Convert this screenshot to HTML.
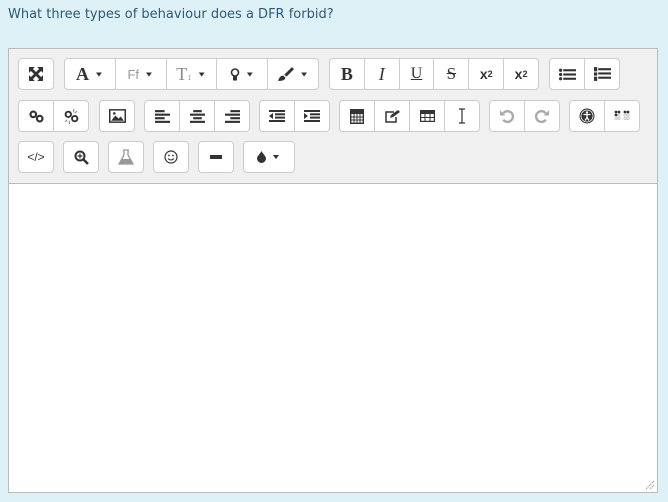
<!DOCTYPE html>
<html><head><meta charset="utf-8"><style>
*{box-sizing:border-box;margin:0;padding:0}
body{width:668px;height:502px;background:#def1f7;font-family:"Liberation Sans",sans-serif;position:relative;overflow:hidden}
.q{position:absolute;left:8px;top:7px;color:#2d5a76;font-family:"DejaVu Sans","Liberation Sans",sans-serif;font-size:13px}
.box{position:absolute;left:8px;top:48px;width:650px;height:445px;border:1px solid #bbb;background:#fff}
.tb{position:absolute;left:0;top:0;width:648px;height:135px;background:#f0f0f0;border-bottom:1px solid #bbb}
.g{position:absolute;height:32px;border:1px solid #ccc;border-radius:4px;background:#fff;display:flex}
.g span{flex:1;display:flex;align-items:center;justify-content:center;border-left:1px solid #ccc;color:#333;font-size:13px;height:100%}
.g span:first-child{border-left:none}
.c{font-size:10px;margin-left:5px;color:#333;font-style:normal;transform:scaleY(0.7)}
svg{display:block}
.rz{position:absolute;right:2px;bottom:2px}
</style></head><body>
<div class="q">What three types of behaviour does a DFR forbid?</div>
<div class="box"><div class="tb">
<div class="g" style="left:9px;top:9px;width:36px"><span><svg width="14" height="14" viewBox="0 0 12 12"><path d="M0 0h5L0 5zM12 0v5L7 0zM0 12V7l5 5zM12 12H7l5-5z" fill="#333"/><path d="M2 2l8 8M10 2l-8 8" stroke="#333" stroke-width="2.4"/></svg></span></div>
<div class="g" style="left:55px;top:9px;width:255px">
<span><b style="font-family:'Liberation Serif';font-size:18px">A</b><i class="c">▼</i></span>
<span><b style="font-weight:normal;color:#999;font-size:13px">Ff</b><i class="c">▼</i></span>
<span><b style="font-family:'Liberation Serif';font-weight:normal;color:#888;font-size:18px">T<small style="font-size:9px">↕</small></b><i class="c">▼</i></span>
<span><svg width="10" height="15" viewBox="0 0 10 14"><circle cx="5" cy="5" r="3.5" fill="none" stroke="#333" stroke-width="1.6"/><rect x="3" y="9" width="4" height="4" fill="#333"/></svg><i class="c">▼</i></span>
<span><svg width="17" height="15" viewBox="0 0 16 14"><path d="M15 1L8 8" stroke="#333" stroke-width="2.8"/><path d="M1 13c1-3 2-5 5-5l2 2c-1 3-4 3-7 3z" fill="#333"/></svg><i class="c">▼</i></span>
</div>
<div class="g" style="left:320px;top:9px;width:210px">
<span style="font-family:'Liberation Serif';font-weight:bold;font-size:18px">B</span>
<span style="font-family:'Liberation Serif';font-style:italic;font-size:18px">I</span>
<span style="font-family:'Liberation Serif';text-decoration:underline;font-size:16px">U</span>
<span style="font-family:'Liberation Serif';text-decoration:line-through;font-size:17px">S</span>
<span style="font-weight:bold;font-size:14px">x<sub style="font-size:9px">2</sub></span>
<span style="font-weight:bold;font-size:14px">x<sup style="font-size:9px">2</sup></span>
</div>
<div class="g" style="left:540px;top:9px;width:71px">
<span><svg width="17" height="13" viewBox="0 0 16 12"><g fill="#333"><circle cx="1.5" cy="2" r="1.5"/><circle cx="1.5" cy="6" r="1.5"/><circle cx="1.5" cy="10" r="1.5"/><rect x="4" y="1" width="12" height="2"/><rect x="4" y="5" width="12" height="2"/><rect x="4" y="9" width="12" height="2"/></g></svg></span>
<span><svg width="17" height="14" viewBox="0 0 16 13"><g fill="#333"><rect x="0" y="0" width="3" height="4"/><rect x="0" y="5" width="3" height="3"/><rect x="0" y="9" width="3" height="4"/><rect x="4" y="1" width="12" height="2"/><rect x="4" y="5" width="12" height="2"/><rect x="4" y="9" width="12" height="2"/></g></svg></span>
</div>
<div class="g" style="left:9px;top:51px;width:71px">
<span><svg width="15" height="13" viewBox="0 0 14 12"><circle cx="4" cy="4" r="2.6" fill="none" stroke="#333" stroke-width="2"/><circle cx="10" cy="8" r="2.6" fill="none" stroke="#333" stroke-width="2"/></svg></span>
<span><svg width="15" height="15" viewBox="0 0 14 14"><circle cx="4" cy="5" r="2.5" fill="none" stroke="#333" stroke-width="1.8"/><circle cx="10" cy="9" r="2.5" fill="none" stroke="#333" stroke-width="1.8"/><path d="M9 0v3M12 2l-2 2M1 12l2-2M5 14v-3" stroke="#888"/></svg></span>
</div>
<div class="g" style="left:90px;top:51px;width:36px"><span><svg width="17" height="14" viewBox="0 0 16 13"><rect x="0.7" y="0.7" width="14.6" height="11.6" fill="none" stroke="#333" stroke-width="1.4"/><path d="M2 11l4-5 3 3 2-2 3 4z" fill="#333"/><circle cx="5" cy="4" r="1.2" fill="#333"/></svg></span></div>
<div class="g" style="left:135px;top:51px;width:106px">
<span><svg width="15" height="13" viewBox="0 0 14 12" fill="#333"><rect y="0" width="9" height="2"/><rect y="3.3" width="14" height="2"/><rect y="6.6" width="9" height="2"/><rect y="10" width="14" height="2"/></svg></span>
<span><svg width="15" height="13" viewBox="0 0 14 12" fill="#333"><rect x="3" y="0" width="8" height="2"/><rect y="3.3" width="14" height="2"/><rect x="3" y="6.6" width="8" height="2"/><rect y="10" width="14" height="2"/></svg></span>
<span><svg width="15" height="13" viewBox="0 0 14 12" fill="#333"><rect x="5" y="0" width="9" height="2"/><rect y="3.3" width="14" height="2"/><rect x="5" y="6.6" width="9" height="2"/><rect y="10" width="14" height="2"/></svg></span>
</div>
<div class="g" style="left:250px;top:51px;width:71px">
<span><svg width="16" height="12" viewBox="0 0 16 12" fill="#333"><rect y="0" width="16" height="2"/><rect x="6" y="3.3" width="10" height="2"/><rect x="6" y="6.6" width="10" height="2"/><rect y="10" width="16" height="2"/><path d="M4 3v6L0 6z"/></svg></span>
<span><svg width="16" height="12" viewBox="0 0 16 12" fill="#333"><rect y="0" width="16" height="2"/><rect x="6" y="3.3" width="10" height="2"/><rect x="6" y="6.6" width="10" height="2"/><rect y="10" width="16" height="2"/><path d="M0 3v6l4-3z"/></svg></span>
</div>
<div class="g" style="left:330px;top:51px;width:141px">
<span><svg width="14" height="15" viewBox="0 0 14 15"><rect x="0.7" y="0.7" width="12.6" height="13.6" fill="none" stroke="#333" stroke-width="1.4"/><rect x="1" y="1" width="12" height="4" fill="#333"/><path d="M1 8h12M1 11h12M4 5v9M7 5v9M10 5v9" stroke="#333"/></svg></span>
<span><svg width="15" height="13" viewBox="0 0 15 13"><path d="M9 2H1v10h10V7" fill="none" stroke="#333" stroke-width="1.5"/><path d="M5 8l1-3 7-5 2 2-7 5z" fill="#333"/></svg></span>
<span><svg width="15" height="12" viewBox="0 0 15 12"><rect x="0.6" y="0.6" width="13.8" height="10.8" fill="none" stroke="#333" stroke-width="1.2"/><rect x="1" y="1" width="13" height="3" fill="#333"/><path d="M1 7.5h13M5 4v8M10 4v8" stroke="#333"/></svg></span>
<span><svg width="8" height="16" viewBox="0 0 8 16"><path d="M1 1h6M4 1v14M1 15h6" stroke="#333" stroke-width="1.2" fill="none"/></svg></span>
</div>
<div class="g" style="left:480px;top:51px;width:71px">
<span><svg width="14" height="14" viewBox="0 0 13 13"><path d="M3 4a5 5 0 1 1 0 6" fill="none" stroke="#aaa" stroke-width="2.2"/><path d="M0 1v5h5z" fill="#aaa"/></svg></span>
<span><svg width="14" height="14" viewBox="0 0 13 13"><path d="M10 4a5 5 0 1 0 0 6" fill="none" stroke="#aaa" stroke-width="2.2"/><path d="M13 1v5H8z" fill="#aaa"/></svg></span>
</div>
<div class="g" style="left:560px;top:51px;width:71px">
<span><svg width="16" height="16" viewBox="0 0 16 16"><circle cx="8" cy="8" r="7.5" fill="#333"/><circle cx="8" cy="8" r="6" fill="none" stroke="#fff" stroke-width="0.8"/><circle cx="8" cy="4.5" r="1.2" fill="#fff"/><path d="M4.5 6.5h7M8 6.5v3M8 9.5l-2 3M8 9.5l2 3" stroke="#fff" stroke-width="1.3"/></svg></span>
<span><svg width="16" height="12" viewBox="0 0 16 12"><g fill="#333"><circle cx="2" cy="2" r="1.4"/><circle cx="5" cy="2" r="1.4"/><circle cx="2" cy="5" r="1.4"/><circle cx="11" cy="2" r="1.4"/><circle cx="14" cy="2" r="1.4"/></g><g fill="none" stroke="#bbb" stroke-width="0.7"><circle cx="5" cy="5" r="1.2"/><circle cx="2" cy="8.5" r="1.2"/><circle cx="5" cy="8.5" r="1.2"/><circle cx="11" cy="5" r="1.2"/><circle cx="14" cy="5" r="1.2"/><circle cx="11" cy="8.5" r="1.2"/><circle cx="14" cy="8.5" r="1.2"/></g></svg></span>
</div>
<div class="g" style="left:9px;top:92px;width:36px"><span style="font-size:12px;color:#333">&lt;/&gt;</span></div>
<div class="g" style="left:54px;top:92px;width:36px"><span><svg width="15" height="15" viewBox="0 0 15 15"><circle cx="6" cy="6" r="4.5" fill="none" stroke="#333" stroke-width="2"/><path d="M9 9l5 5" stroke="#333" stroke-width="2.5"/><path d="M6 3.5v5M3.5 6h5" stroke="#333" stroke-width="1.2"/></svg></span></div>
<div class="g" style="left:99px;top:92px;width:36px"><span><svg width="16" height="16" viewBox="0 0 16 16"><path d="M5 1h6M6 1v5L1 15h14L10 6V1" fill="none" stroke="#999" stroke-width="1.3"/><path d="M3.5 10h9l2.5 5H1z" fill="#999"/></svg></span></div>
<div class="g" style="left:144px;top:92px;width:36px"><span><svg width="14" height="14" viewBox="0 0 14 14"><circle cx="7" cy="7" r="6" fill="none" stroke="#333" stroke-width="1.2"/><circle cx="5" cy="5.5" r="0.9" fill="#333"/><circle cx="9" cy="5.5" r="0.9" fill="#333"/><path d="M4 8.5q3 3 6 0" fill="none" stroke="#333" stroke-width="1.1"/></svg></span></div>
<div class="g" style="left:189px;top:92px;width:36px"><span><svg width="12" height="4"><rect width="12" height="4" fill="#333"/></svg></span></div>
<div class="g" style="left:234px;top:92px;width:52px"><span><svg width="9" height="12" viewBox="0 0 9 12"><path d="M4.5 0C3 3 0 5 0 7.5a4.5 4.5 0 0 0 9 0C9 5 6 3 4.5 0z" fill="#333"/></svg><i class="c">▼</i></span></div>
</div>
<svg class="rz" width="10" height="10" viewBox="0 0 10 10"><path d="M9 1L1 9M9 5L5 9" stroke="#777" stroke-dasharray="1 1"/></svg>
</div>
</body></html>
